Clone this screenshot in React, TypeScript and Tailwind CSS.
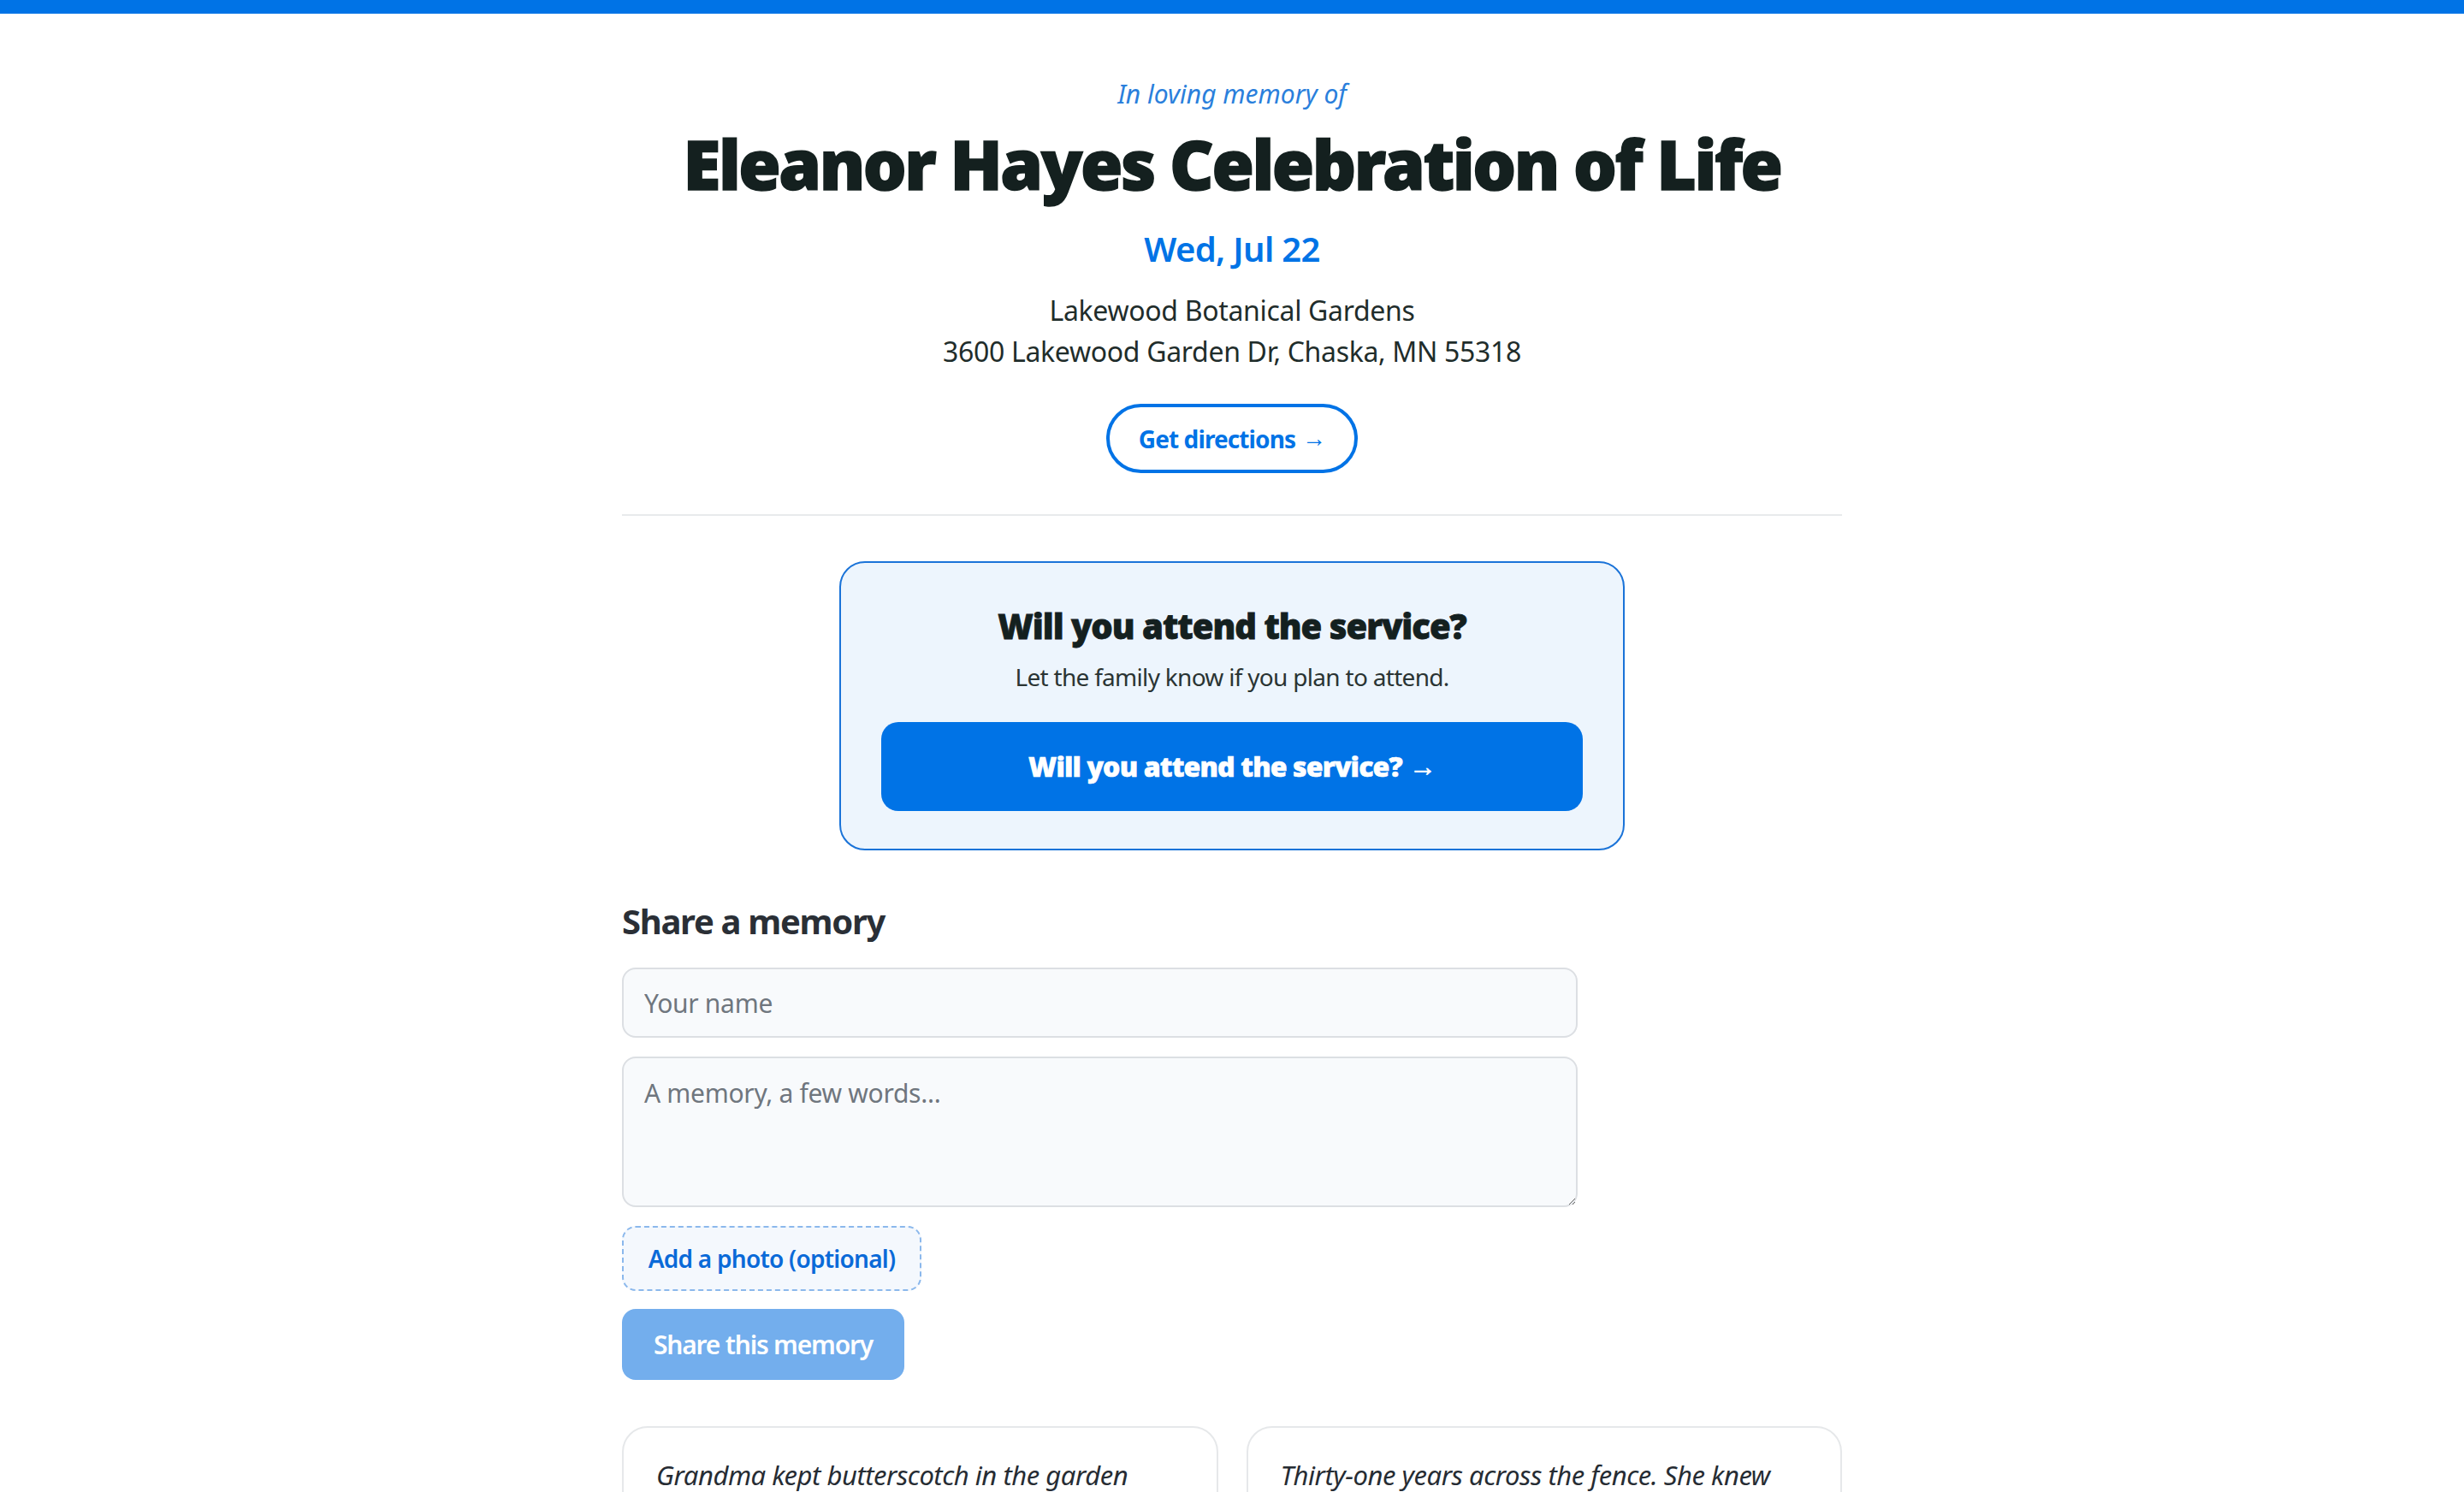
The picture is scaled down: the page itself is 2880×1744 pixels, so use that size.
import React from "react";

const memories = [
  "Grandma kept butterscotch in the garden pockets of her cardigan, and a spare one for whoever looked sad.",
  "Thirty-one years across the fence. She knew every bird by its song and every neighbor by name.",
];

function Arrow() {
  return <span className="ml-[8px] font-['Liberation_Sans',sans-serif] font-normal">→</span>;
}

export default function App() {
  return (
    <div className="min-h-screen bg-white font-['Noto_Sans','Open_Sans',sans-serif] text-[#1f2b2a]">
      <div className="h-[16px] bg-[#0073e6]" />

      <main className="mx-auto w-[1426px] pb-[80px]">
        <header className="flex flex-col items-center pt-[74px] text-center">
          <p className="text-[30px] leading-[40px] italic text-[#2a7fdc]">In loving memory of</p>
          <h1 className="mt-[13px] text-[80px] leading-[96px] font-black tracking-[-2.5px] text-[#14201f] [-webkit-text-stroke:1.5px_#14201f]">
            Eleanor Hayes Celebration of Life
          </h1>
          <p className="mt-[26px] text-[40px] leading-[52px] font-semibold tracking-[-0.65px] text-[#0073e6]">Wed, Jul 22</p>
          <div className="mt-[22px] text-[32px] leading-[48px] tracking-[-0.32px] text-[#1f2d2b]">
            <p>Lakewood Botanical Gardens</p>
            <p>3600 Lakewood Garden Dr, Chaska, MN 55318</p>
          </div>
          <a
            href="#directions"
            className="mt-[37px] flex h-[81px] w-[294px] items-center justify-center rounded-full border-[4px] border-[#0073e6] text-[28px] font-bold tracking-[-0.9px] text-[#0073e6]"
          >
            Get directions<Arrow />
          </a>
        </header>

        <hr className="mt-[48px] border-0 border-t-[2px] border-[#e8eaec]" />

        <section className="mx-auto mt-[53px] w-[918px] rounded-[30px] border-[2px] border-[#1a73d8] bg-[#edf5fd] px-[47px] pt-[48px] pb-[44px] text-center">
          <h2 className="text-[40px] leading-[52px] font-black tracking-[-1px] text-[#14201f] [-webkit-text-stroke:0.8px_#14201f]">
            Will you attend the service?
          </h2>
          <p className="mt-[13px] text-[28px] leading-[40px] tracking-[-0.7px] text-[#2a3433]">Let the family know if you plan to attend.</p>
          <button className="mt-[33px] flex h-[104px] w-full items-center justify-center rounded-[20px] bg-[#0073e6] text-[32px] font-black tracking-[-0.85px] text-white [-webkit-text-stroke:0.6px_#ffffff]">
            Will you attend the service?<Arrow />
          </button>
        </section>

        <section className="mt-[57px]">
          <h2 className="text-[40px] leading-[52px] font-bold tracking-[-1.3px] text-[#2a2f36]">Share a memory</h2>

          <div className="mt-[28px] flex w-[1117px] flex-col">
            <input
              placeholder="Your name"
              className="h-[82px] rounded-[16px] border-[2px] border-[#dcdfe3] bg-[#f8fafc] px-[24px] text-[30px] tracking-[-0.3px] text-[#1f2b2a] placeholder:text-[#6f767e] outline-none"
            />
            <textarea
              placeholder="A memory, a few words..."
              className="mt-[22px] h-[176px] resize-y rounded-[16px] border-[2px] border-[#dcdfe3] bg-[#f8fafc] px-[24px] pt-[21px] text-[30px] leading-[40px] tracking-[-0.3px] text-[#1f2b2a] placeholder:text-[#6f767e] outline-none"
            />
          </div>

          <div className="mt-[22px] flex flex-col items-start gap-[21px]">
            <button className="flex h-[76px] w-[350px] items-center justify-center rounded-[16px] border-[2px] border-dashed border-[#8bb8ec] bg-[#f4f8fd] text-[28px] font-semibold tracking-[-0.75px] text-[#0a6ad8]">
              Add a photo (optional)
            </button>
            <button className="flex h-[83px] w-[330px] items-center justify-center rounded-[16px] bg-[#73aeed] text-[30px] font-semibold tracking-[-1.2px] text-white">
              Share this memory
            </button>
          </div>
        </section>

        <section className="mt-[54px] grid grid-cols-2 gap-[33px]">
          {memories.map((m) => (
            <article key={m} className="rounded-[30px] border-[2px] border-[#e6e8ea] bg-white px-[38px] pt-[30px] pb-[36px]">
              <p className="text-[31px] leading-[50px] italic tracking-[-0.47px] text-[#262c33]">{m}</p>
            </article>
          ))}
        </section>
      </main>
    </div>
  );
}
